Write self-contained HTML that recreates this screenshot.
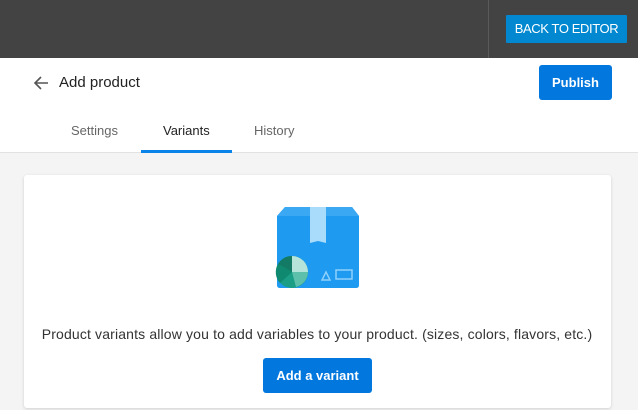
<!DOCTYPE html>
<html><head><style>
body{margin:0;width:638px;height:410px;overflow:hidden;background:#f4f4f4;font-family:"Liberation Sans",sans-serif;position:relative}
.top{position:absolute;left:0;top:0;width:638px;height:58px;background:#434343}
.div{position:absolute;left:488px;top:0;width:1px;height:58px;background:#5a5a5a}
.back{position:absolute;left:506px;top:15px;width:121px;height:28px;background:#0288d1;color:#fff;font-size:13px;line-height:28px;text-align:center;border-radius:1px;letter-spacing:-0.4px}
.white{position:absolute;left:0;top:58px;width:638px;height:94px;background:#fff;border-bottom:1px solid #e2e2e2}
.title{position:absolute;left:59px;top:74px;font-size:15px;color:#222}
.pub{position:absolute;left:539px;top:65px;width:73px;height:35px;background:#0277dd;border-radius:3px;color:#fff;font-weight:bold;font-size:13px;line-height:35px;text-align:center}
.tab{position:absolute;top:123px;font-size:13px;color:#666}
.ul{position:absolute;left:141px;top:150px;width:91px;height:3px;background:#0a84e8}
.card{position:absolute;left:24px;top:175px;width:587px;height:233px;background:#fff;border-radius:3px;box-shadow:0 1px 3px rgba(0,0,0,.15)}
.txt{position:absolute;left:0;width:634px;top:326px;text-align:center;font-size:14px;color:#333;letter-spacing:0.15px}
.add{position:absolute;left:263px;top:358px;width:109px;height:35px;background:#0277dd;border-radius:3px;color:#fff;font-weight:bold;font-size:13px;line-height:35px;text-align:center}
</style></head><body>
<div class="top"></div><div class="div"></div>
<div class="back">BACK TO EDITOR</div>
<div class="white"></div>
<svg style="position:absolute;left:32px;top:75px" width="18" height="16"><path d="M16 8H3M9 2L3 8l6 6" stroke="#555" stroke-width="1.6" fill="none"/></svg>
<div class="title">Add product</div>
<div class="pub">Publish</div>
<div class="tab" style="left:71px">Settings</div>
<div class="tab" style="left:163px;color:#222">Variants</div>
<div class="tab" style="left:254px">History</div>
<div class="ul"></div>
<div class="card"></div>
<svg style="position:absolute;left:270px;top:200px" width="95" height="95">
<path d="M15 7H82L89 16V85Q89 88 86 88H10Q7 88 7 85V16Z" fill="#1e9af0"/>
<path d="M7 16L15 7H82L89 16Z" fill="#3aa8f3"/>
<path d="M40 7H56V43L48 41L40 43Z" fill="#a9dcfb"/>
<path d="M66 70h16v9h-16z" fill="none" stroke="#8fd0fa" stroke-width="1.5"/>
<path d="M52 80l4-8l4 8z" fill="none" stroke="#8fd0fa" stroke-width="1.5"/>
<circle cx="22" cy="72" r="16" fill="#1a9e85"/>
<path d="M22 72V56A16 16 0 0 1 38 72Z" fill="#b5e4da"/>
<path d="M22 72H38A16 16 0 0 1 26 87Z" fill="#5cc0aa"/>
<path d="M22 72V56A16 16 0 0 0 8 64Z" fill="#137a66"/>
<path d="M22 72L8 64A16 16 0 0 0 10 83Z" fill="#0f8a70"/>
</svg>
<div class="txt">Product variants allow you to add variables to your product. (sizes, colors, flavors, etc.)</div>
<div class="add">Add a variant</div>
</body></html>
